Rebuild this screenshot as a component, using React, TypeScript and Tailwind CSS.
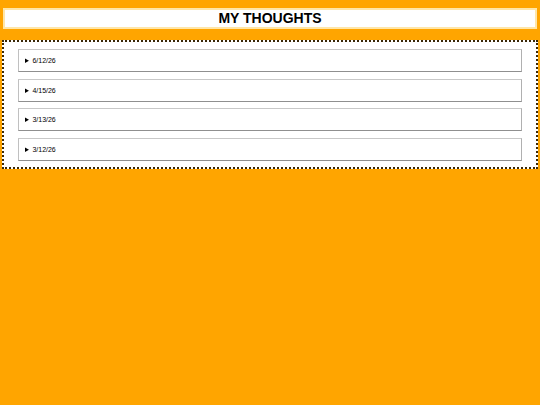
import React from "react";

const entries = ["6/12/26", "4/15/26", "3/13/26", "3/12/26"];

export default function App() {
  return (
    <div className="min-h-screen bg-[#ffa500] pt-[8px] font-['Liberation_Sans',Arial,sans-serif] text-black">
      <header className="mx-[3px] h-[21px] bg-white border-2 border-[#ffe6a8] flex items-center justify-center">
        <h1 className="text-[14px] font-bold leading-none -mt-[1px]">MY THOUGHTS</h1>
      </header>

      <main className="mt-[11px] mx-[2px] border-2 border-dotted border-[#3a2806] bg-white px-[14px] pt-[7px] pb-[6px] flex flex-col gap-[6.67px]">
        {entries.map((date) => (
          <details
            key={date}
            className="border border-t-[#c8c8c8] border-l-[#c0c0c0] border-r-[#b0b0b0] border-b-[#8f8f8f]"
          >
            <summary className="h-[21px] leading-[21px] pl-[6px] text-[7px] cursor-pointer">
              {date}
            </summary>
            <p className="px-[6px] pb-[6px] text-[7px]">No thoughts recorded.</p>
          </details>
        ))}
      </main>
    </div>
  );
}
